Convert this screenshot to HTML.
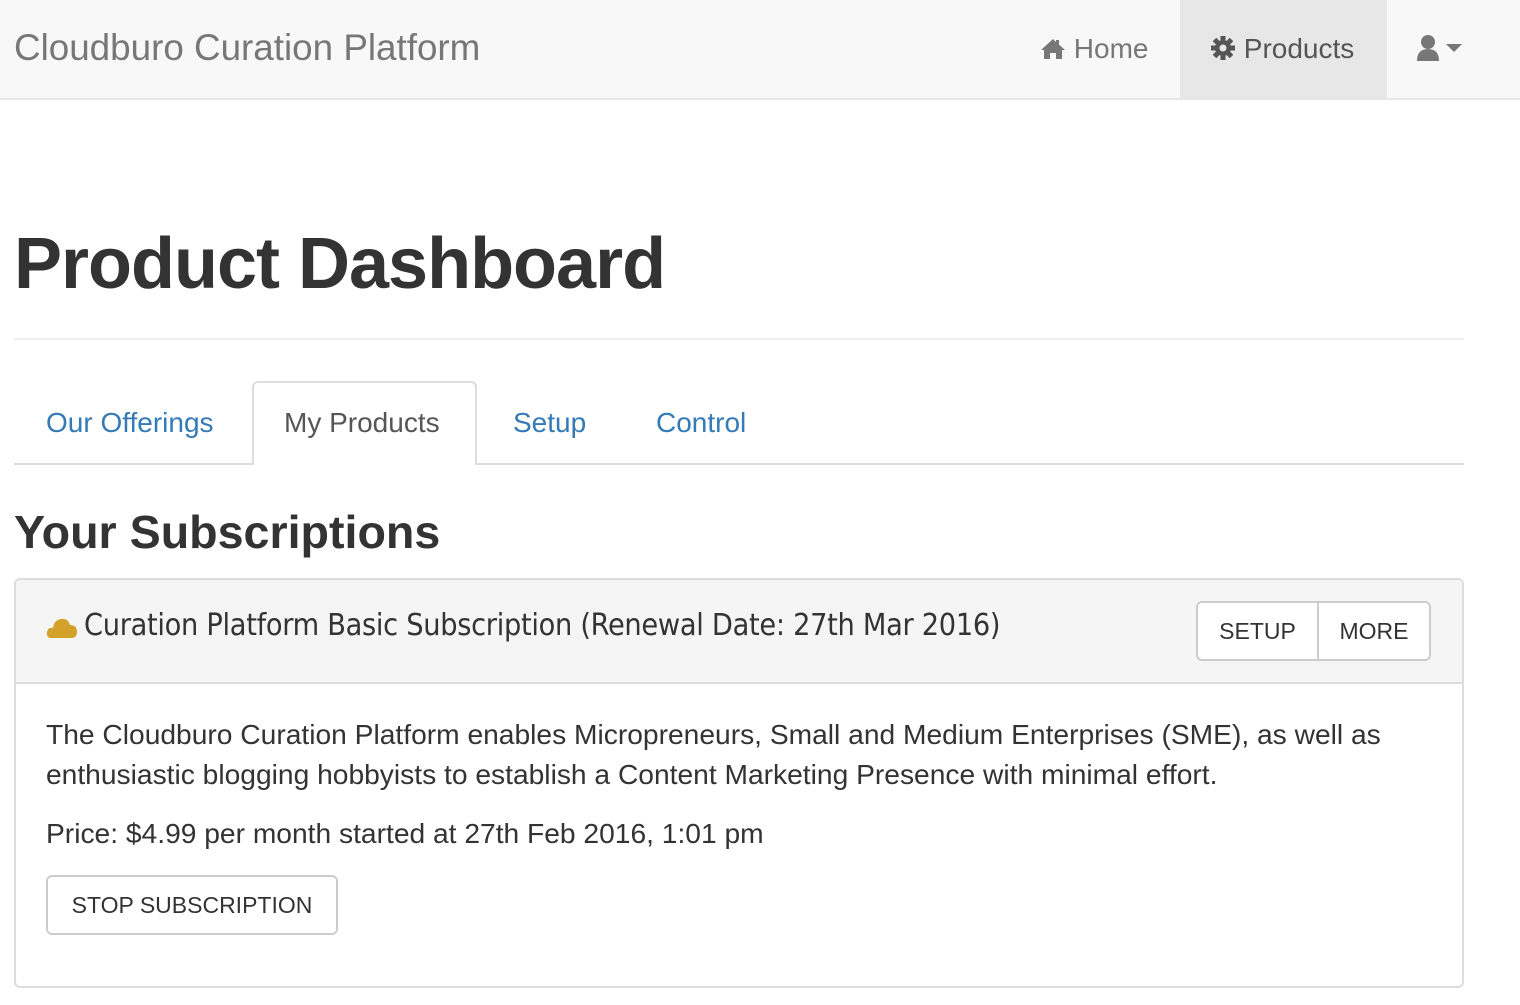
<!DOCTYPE html>
<html><head><style>
*{margin:0;padding:0;box-sizing:border-box}
body{width:1520px;height:1005px;background:#fff;font-family:"Liberation Sans",sans-serif;position:relative;overflow:hidden;color:#333}
.a{position:absolute;white-space:nowrap}
.btn{position:absolute;border:2px solid #ccc;background:#fff;color:#333;font-size:23px;display:flex;align-items:center;justify-content:center}
</style></head><body>
<div class="a" style="left:0;top:0;width:1520px;height:100px;background:#f8f8f8;border-bottom:2px solid #e7e7e7"></div>
<div class="a" style="left:14px;top:27px;font-size:36.8px;color:#777">Cloudburo Curation Platform</div>
<div class="a" style="left:1040px;top:33px;font-size:28px;color:#777">
<svg width="26" height="22" viewBox="0 0 26 22" style="vertical-align:-2px"><path d="M13 1 L1 12 L4 12 L4 21 L10 21 L10 15 L16 15 L16 21 L22 21 L22 12 L25 12 L19 6.5 L19 2 L16 2 L16 4 Z" fill="#777"/></svg> Home</div>
<div class="a" style="left:1180px;top:0;width:207px;height:98px;background:#e7e7e7"></div>
<div class="a" style="left:1210px;top:33px;font-size:28px;color:#555">
<svg width="26" height="26" viewBox="0 0 26 26" style="vertical-align:-3px"><circle cx="13" cy="13" r="8" fill="#555"/><g stroke="#555" stroke-width="5"><path d="M13 1v24M1 13h24M4.5 4.5l17 17M21.5 4.5l-17 17"/></g><circle cx="13" cy="13" r="3.5" fill="#e7e7e7"/></svg> Products</div>
<svg class="a" style="left:1416px;top:34px" width="50" height="28" viewBox="0 0 50 28"><circle cx="12" cy="8" r="7" fill="#777"/><path d="M1 27 Q1 15 12 15 Q23 15 23 27 Z" fill="#777"/><path d="M30 10h16l-8 8z" fill="#777"/></svg>
<div class="a" style="left:14px;top:223px;font-size:72px;font-weight:bold;color:#333;letter-spacing:-1px">Product Dashboard</div>
<div class="a" style="left:14px;top:338px;width:1450px;height:2px;background:#eee"></div>
<div class="a" style="left:14px;top:463px;width:1450px;height:2px;background:#ddd"></div>
<div class="a" style="left:252px;top:381px;width:225px;height:84px;background:#fff;border:2px solid #ddd;border-bottom:none;border-radius:6px 6px 0 0"></div>
<div class="a" style="left:46px;top:407px;font-size:28px;color:#337ab7">Our Offerings</div>
<div class="a" style="left:284px;top:407px;font-size:28px;color:#555">My Products</div>
<div class="a" style="left:513px;top:407px;font-size:28px;color:#337ab7">Setup</div>
<div class="a" style="left:656px;top:407px;font-size:28px;color:#337ab7">Control</div>
<div class="a" style="left:14px;top:505px;font-size:46.6px;font-weight:bold;color:#333">Your Subscriptions</div>
<div class="a" style="left:14px;top:578px;width:1450px;height:410px;border:2px solid #ddd;border-radius:6px;overflow:hidden">
<div style="height:104px;background:#f5f5f5;border-bottom:2px solid #ddd"></div></div>
<svg class="a" style="left:46px;top:615px" width="32" height="24" viewBox="0 0 32 24"><path d="M6 23 Q0 23 1 17 Q2 12 7 13 Q8 5 15 4 Q22 3 24 10 Q31 10 31 17 Q31 23 25 23 Z" fill="#d4a12a"/></svg>
<div class="a" style="left:84px;top:608px;font-size:30.3px;color:#333;font-family:'DejaVu Sans Condensed','DejaVu Sans',sans-serif;letter-spacing:-0.3px">Curation Platform Basic Subscription (Renewal Date: 27th Mar 2016)</div>
<div class="btn" style="left:1196px;top:601px;width:123px;height:60px;border-radius:6px 0 0 6px">SETUP</div>
<div class="btn" style="left:1317px;top:601px;width:114px;height:60px;border-radius:0 6px 6px 0">MORE</div>
<div class="a" style="left:46px;top:714px;font-size:28.2px;line-height:40px;color:#333">The Cloudburo Curation Platform enables Micropreneurs, Small and Medium Enterprises (SME), as well as<br>enthusiastic blogging hobbyists to establish a Content Marketing Presence with minimal effort.</div>
<div class="a" style="left:46px;top:817px;font-size:28.2px;color:#333">Price: $4.99 per month started at 27th Feb 2016, 1:01 pm</div>
<div class="btn" style="left:46px;top:875px;width:292px;height:60px;border-radius:6px">STOP SUBSCRIPTION</div>
</body></html>
